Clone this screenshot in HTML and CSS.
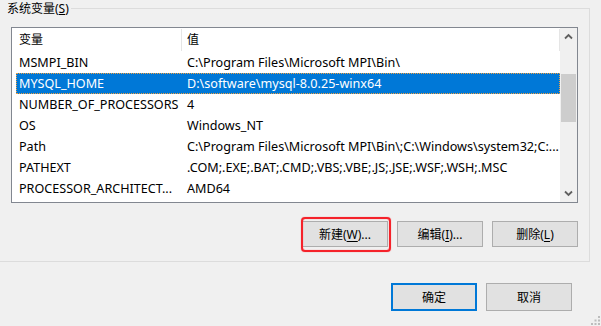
FILE: index.html
```html
<!DOCTYPE html>
<html>
<head>
<meta charset="utf-8">
<link rel="stylesheet" href="styles.css">
</head>
<body>
<div class="dialog">
  <div class="group">
    <div class="group-head">
      <span class="legend">系统变量(<u>S</u>)</span>
      <span class="rule"></span>
    </div>
    <div class="group-body">
      <div class="list">
        <div class="list-main">
          <div class="hdr">
            <div class="h1">变量</div>
            <div class="h2">值</div>
          </div>
          <div class="row"><div class="c1">MSMPI_BIN</div><div class="c2">C:\Program Files\Microsoft MPI\Bin\</div></div>
          <div class="row sel"><div class="c1">MYSQL_HOME</div><div class="c2">D:\software\mysql-8.0.25-winx64</div></div>
          <div class="row"><div class="c1">NUMBER_OF_PROCESSORS</div><div class="c2">4</div></div>
          <div class="row"><div class="c1">OS</div><div class="c2">Windows_NT</div></div>
          <div class="row"><div class="c1">Path</div><div class="c2">C:\Program Files\Microsoft MPI\Bin\;C:\Windows\system32;C:...</div></div>
          <div class="row"><div class="c1">PATHEXT</div><div class="c2">.COM;.EXE;.BAT;.CMD;.VBS;.VBE;.JS;.JSE;.WSF;.WSH;.MSC</div></div>
          <div class="row"><div class="c1">PROCESSOR_ARCHITECT...</div><div class="c2">AMD64</div></div>
        </div>
        <div class="scrollbar">
          <div class="arrow">
            <svg width="9" height="7" viewBox="0 0 9 7"><path d="M1 5.5 L4.5 2 L8 5.5" fill="none" stroke="#606060" stroke-width="1.8"/></svg>
          </div>
          <div class="track"><div class="thumb"></div></div>
          <div class="arrow">
            <svg width="9" height="7" viewBox="0 0 9 7"><path d="M1 1.5 L4.5 5 L8 1.5" fill="none" stroke="#606060" stroke-width="1.8"/></svg>
          </div>
        </div>
      </div>
      <div class="btns">
        <span class="mark-wrap">
          <button class="btn">新建(<u>W</u>)...</button>
          <span class="mark"></span>
        </span>
        <button class="btn">编辑(<u>I</u>)...</button>
        <button class="btn">删除(<u>L</u>)</button>
      </div>
    </div>
  </div>
  <div class="footer">
    <button class="btn big default">确定</button>
    <button class="btn big">取消</button>
  </div>
  <svg class="grip" width="11" height="11" viewBox="0 0 11 11">
    <rect x="8" y="1" width="2" height="2" fill="#bcbcbc"/>
    <rect x="4.5" y="4.5" width="2" height="2" fill="#bcbcbc"/>
    <rect x="8" y="4.5" width="2" height="2" fill="#bcbcbc"/>
    <rect x="1" y="8" width="2" height="2" fill="#bcbcbc"/>
    <rect x="4.5" y="8" width="2" height="2" fill="#bcbcbc"/>
    <rect x="8" y="8" width="2" height="2" fill="#bcbcbc"/>
  </svg>
</div>
</body>
</html>
```

FILE: styles.css
```css
* { box-sizing: border-box; }
html, body {
  margin: 0;
  padding: 0;
  background: #f0f0f0;
}
body {
  font-family: "Noto Sans", "Noto Sans CJK SC", sans-serif;
  font-size: 12px;
  color: #000;
  width: 601px;
  height: 326px;
  overflow: hidden;
}
.dialog {
  position: relative;
  width: 601px;
  height: 326px;
}
.group {
  width: 590px;
}
.group-head {
  display: flex;
  height: 16px;
}
.legend {
  padding: 0 2px 0 7px;
  line-height: 18px;
  white-space: nowrap;
}
.rule {
  flex: 1;
  margin-top: 8px;
  border-top: 1px solid #dcdcdc;
  border-right: 1px solid #dcdcdc;
}
.group-body {
  border-right: 1px solid #dcdcdc;
  border-bottom: 1px solid #dcdcdc;
  padding: 11px 11px 14px 11px;
}
.list {
  display: flex;
  height: 176px;
  border: 1px solid #828790;
  background: #fff;
}
.list-main {
  flex: 1;
  min-width: 0;
}
.hdr {
  display: flex;
  height: 24px;
}
.h1, .h2 {
  margin: 1px 0;
  line-height: 22px;
  border-right: 1px solid #e5e5e5;
  white-space: nowrap;
}
.h1 {
  width: 170px;
  padding-left: 7px;
}
.h2 {
  flex: 1;
  padding-left: 5px;
}
.row {
  display: flex;
  height: 21px;
  line-height: 21px;
  margin-left: 4px;
  white-space: nowrap;
  font-size: 12.6px;
}
.c1 {
  width: 166px;
  padding-left: 3px;
  overflow: hidden;
}
.c2 {
  flex: 1;
  padding-left: 5px;
  overflow: hidden;
}
.row.sel {
  background: #0078d7;
  color: #fff;
  outline: 1px dotted #f0a040;
  outline-offset: -1px;
}
.scrollbar {
  width: 17px;
  display: flex;
  flex-direction: column;
  background: #f0f0f0;
}
.arrow {
  height: 17px;
  display: flex;
  align-items: center;
  justify-content: center;
}
.track {
  flex: 1;
  padding: 29px 1px 0 1px;
}
.thumb {
  height: 48px;
  background: #cdcdcd;
}
.btns {
  display: flex;
  justify-content: flex-end;
  gap: 9px;
  margin-top: 18px;
}
.btn {
  width: 86px;
  height: 26px;
  padding: 0;
  margin: 0;
  background: #e1e1e1;
  border: 1px solid #adadad;
  border-radius: 0;
  font-family: inherit;
  font-size: 12px;
  color: #000;
}
.btn u { text-underline-offset: 2px; }
.mark-wrap {
  position: relative;
  display: flex;
}
.mark {
  position: absolute;
  top: -4px;
  bottom: -5px;
  left: -1px;
  right: -3px;
  border: 2px solid #f5222a;
  border-radius: 4px;
  box-shadow: 0 0 1px rgba(245, 34, 42, 0.7), inset 0 0 1px rgba(245, 34, 42, 0.7);
}
.footer {
  display: flex;
  justify-content: flex-end;
  gap: 9px;
  margin-top: 21px;
  padding-right: 29px;
}
.btn.big {
  height: 28px;
}
.btn.default {
  border: 2px solid #0078d7;
}
.grip {
  position: absolute;
  right: 0;
  bottom: 0;
}
```
